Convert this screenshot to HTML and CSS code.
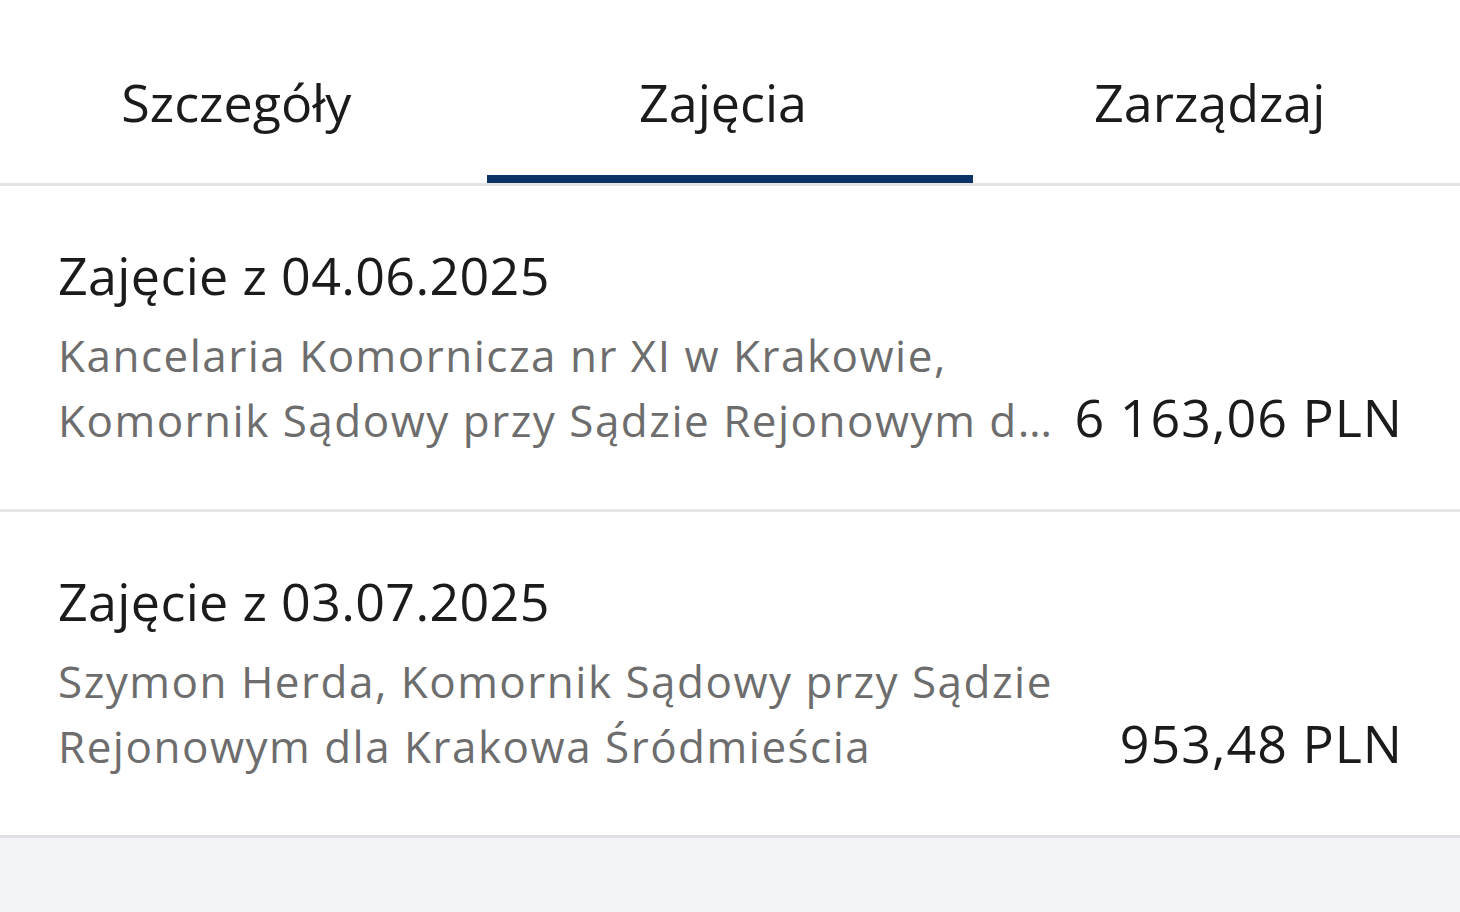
FILE: index.html
```html
<!DOCTYPE html>
<html lang="pl">
<head>
<meta charset="utf-8">
<title>Zajęcia</title>
<link rel="stylesheet" href="styles.css">
</head>
<body>
<div class="screen">
  <nav class="tabs">
    <div class="tab">Szczegóły</div>
    <div class="tab tab-active">Zajęcia</div>
    <div class="tab">Zarządzaj</div>
  </nav>
  <ul class="list">
    <li class="item">
      <div class="item-text">
        <div class="item-title">Zajęcie z 04.06.2025</div>
        <div class="item-sub">Kancelaria Komornicza nr XI w Krakowie, Komornik Sądowy przy Sądzie Rejonowym dla Krakowa Śródmieścia</div>
      </div>
      <div class="item-amount">6 163,06 PLN</div>
    </li>
    <li class="item">
      <div class="item-text">
        <div class="item-title">Zajęcie z 03.07.2025</div>
        <div class="item-sub">Szymon Herda, Komornik Sądowy przy Sądzie Rejonowym dla Krakowa Śródmieścia</div>
      </div>
      <div class="item-amount">953,48 PLN</div>
    </li>
  </ul>
</div>
</body>
</html>
```
FILE: styles.css
```css
html, body {
  margin: 0;
  padding: 0;
}
body {
  background: #f3f4f8;
  font-family: "Open Sans", "Noto Sans", sans-serif;
  color: #1b1b1b;
  min-height: 912px;
}
.screen {
  background: #ffffff;
  width: 1460px;
}
.tabs {
  display: flex;
  border-bottom: 3px solid #e4e4e6;
}
.tab {
  flex: 1;
  text-align: center;
  font-size: 52px;
  line-height: 64px;
  padding: 70px 14px 41px 0;
  border-bottom: 8px solid transparent;
  color: #1b1b1b;
}
.tab-active {
  border-bottom-color: #0c3266;
}
.list {
  list-style: none;
  margin: 0;
  padding: 0;
}
.item {
  display: flex;
  align-items: last baseline;
  gap: 14px;
  padding: 57px 57px 56px 58px;
  border-bottom: 3px solid #e6e6e8;
}
.item:last-child {
  border-bottom-color: #e0e1e4;
}
.item-text {
  flex: 1;
  min-width: 0;
}
.item-title {
  font-size: 52px;
  line-height: 64px;
  letter-spacing: 0.35px;
  color: #1b1b1b;
  margin-bottom: 16px;
}
.item-sub {
  font-size: 44px;
  line-height: 65px;
  letter-spacing: 1.5px;
  color: #6d6d6d;
  display: -webkit-box;
  -webkit-box-orient: vertical;
  -webkit-line-clamp: 2;
  overflow: hidden;
}
.item-amount {
  font-size: 52px;
  line-height: 65px;
  letter-spacing: 1px;
  color: #1b1b1b;
  white-space: nowrap;
}
```
